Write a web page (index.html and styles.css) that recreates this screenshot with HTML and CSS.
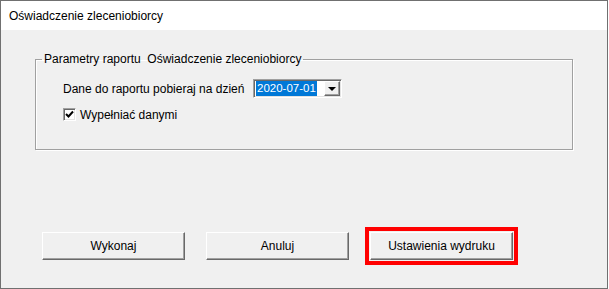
FILE: index.html
```html
<!DOCTYPE html>
<html lang="pl">
<head>
    <meta charset="UTF-8">
    <title>Oświadczenie zleceniobiorcy</title>
    <link rel="stylesheet" href="styles.css">
</head>
<body>
    <div class="window">
        <div class="title-bar">Oświadczenie zleceniobiorcy</div>
        <div class="client">
            <fieldset class="group">
                <legend>Parametry raportu&nbsp; Oświadczenie zleceniobiorcy</legend>
                <div class="group-body">
                    <div class="row">
                        <label for="dateCombo">Dane do raportu pobieraj na dzień</label>
                        <div class="combo" id="dateCombo">
                            <span class="combo-value">2020-07-01</span>
                            <span class="combo-button"><span class="arrow"></span></span>
                        </div>
                    </div>
                    <div class="row check-row">
                        <span class="checkbox">
                            <svg width="9" height="9" viewBox="0 0 9 9"><path d="M1 4 L3.5 6.5 L8 1.5" fill="none" stroke="#000" stroke-width="2"/></svg>
                        </span>
                        <span>Wypełniać danymi</span>
                    </div>
                </div>
            </fieldset>
            <div class="buttons">
                <button type="button">Wykonaj</button>
                <button type="button">Anuluj</button>
                <button type="button" class="highlighted">Ustawienia wydruku</button>
            </div>
        </div>
    </div>
</body>
</html>
```

FILE: styles.css
```css
body {
    margin: 0;
    background-color: #fff;
    font-family: "Liberation Sans", Arial, sans-serif;
    font-size: 12px;
    color: #000;
}
.window {
    width: 608px;
    height: 289px;
    box-sizing: border-box;
    border: 1px solid #707070;
    display: flex;
    flex-direction: column;
    background-color: #f0f0f0;
}
.title-bar {
    height: 29px;
    line-height: 31px;
    padding-left: 8px;
    background-color: #fff;
    font-family: "Liberation Sans", Arial, sans-serif;
    font-size: 12px;
}
.client {
    flex: 1;
    display: flex;
    flex-direction: column;
}
.group {
    margin: 22px 0 0 34px;
    width: 538px;
    box-sizing: border-box;
    padding: 0;
    border: 1px solid #a0a0a0;
    box-shadow: 1px 1px 0 #fff, inset 1px 1px 0 #fff;
}
.group legend {
    margin-left: 6px;
    padding: 0 2px;
    line-height: 14px;
}
.group-body {
    padding: 13px 0 28px 27px;
}
.row {
    display: flex;
    align-items: center;
    height: 19px;
}
.row label {
    width: 190px;
}
.combo {
    width: 89px;
    height: 19px;
    box-sizing: border-box;
    display: flex;
    align-items: center;
    padding: 1px 1px 1px 2px;
    background-color: #fff;
    border-top: 1px solid #a0a0a0;
    border-left: 1px solid #a0a0a0;
    border-right: 1px solid #fff;
    border-bottom: 1px solid #fff;
    box-shadow: inset 1px 1px 0 #696969, inset -1px -1px 0 #e3e3e3;
}
.combo-value {
    height: 15px;
    line-height: 15px;
    padding: 0 1px;
    white-space: nowrap;
    font-size: 11.5px;
    background-color: #0078d7;
    color: #fff;
}
.combo-button {
    margin-left: auto;
    width: 16px;
    height: 15px;
    box-sizing: border-box;
    display: flex;
    align-items: center;
    justify-content: center;
    background-color: #f0f0f0;
    border-top: 1px solid #fff;
    border-left: 1px solid #fff;
    border-right: 1px solid #696969;
    border-bottom: 1px solid #696969;
    box-shadow: inset -1px -1px 0 #a0a0a0;
}
.arrow {
    width: 0;
    height: 0;
    border-left: 4px solid transparent;
    border-right: 4px solid transparent;
    border-top: 4px solid #000;
    margin-top: 1px;
}
.check-row {
    margin-top: 10px;
    height: 13px;
    gap: 4px;
}
.checkbox {
    width: 13px;
    height: 13px;
    box-sizing: border-box;
    display: flex;
    align-items: center;
    justify-content: center;
    background-color: #fff;
    border-top: 1px solid #a0a0a0;
    border-left: 1px solid #a0a0a0;
    border-right: 1px solid #fff;
    border-bottom: 1px solid #fff;
    box-shadow: inset 1px 1px 0 #696969, inset -1px -1px 0 #e3e3e3;
}
.buttons {
    display: flex;
    gap: 21px;
    margin: 82px 0 0 41px;
}
.buttons button {
    width: 143px;
    height: 28px;
    font-family: "Liberation Sans", Arial, sans-serif;
    font-size: 12px;
    color: #000;
    background-color: #f0f0f0;
    border-top: 1px solid #fff;
    border-left: 1px solid #fff;
    border-right: 1px solid #696969;
    border-bottom: 1px solid #696969;
    box-shadow: inset -1px -1px 0 #a0a0a0;
    padding: 0;
}
.buttons .highlighted {
    outline: 4px solid #f00;
    outline-offset: 1px;
}
```
